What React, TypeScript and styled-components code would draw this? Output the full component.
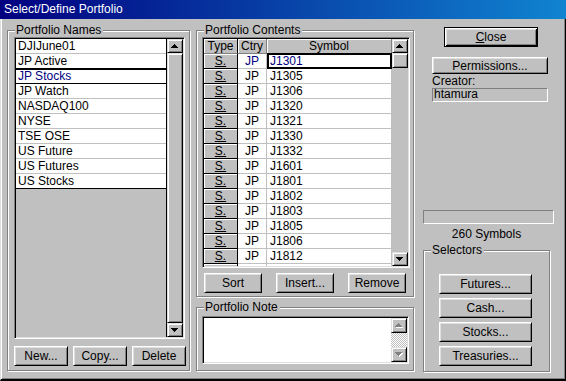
import React from "react";
import styled, { createGlobalStyle, css } from "styled-components";

const FACE = "#c0c0c0";
const LIGHT = "#dfdfdf";
const SHADOW = "#808080";
const NAVY = "#000080";

const GlobalStyle = createGlobalStyle`
  html, body { margin: 0; padding: 0; background: ${FACE}; }
  body { font-family: "Liberation Sans", Arial, sans-serif; font-size: 12px; color: #000; }
  *, *::before, *::after { box-sizing: border-box; }
  button { font-family: inherit; }
`;

const Window = styled.div`
  width: 566px;
  height: 381px;
  display: flex;
  flex-direction: column;
  background: ${FACE};
  overflow: hidden;
`;

const TitleBar = styled.div`
  flex: none;
  height: 19px;
  padding-left: 4px;
  background: linear-gradient(to right, #000080, #1084d0);
  color: #fff;
  font-size: 12px;
  line-height: 19px;
  white-space: nowrap;
`;

const Client = styled.div`
  flex: 1;
  display: flex;
  align-items: flex-start;
  padding-left: 6px;
  border-left: 1px solid ${LIGHT};
  border-right: 1px solid #000;
  border-bottom: 2px solid #000;
  box-shadow: inset 1px 0 #fff, inset -1px -1px ${SHADOW};
`;

const LeftColumn = styled.div`
  flex: none;
  margin-top: 11px;
`;

const MiddleColumn = styled.div`
  flex: none;
  width: 218px;
  margin-top: 11px;
  margin-left: 6px;
  display: flex;
  flex-direction: column;
  gap: 10px;
`;

const RightColumn = styled.div`
  flex: none;
  width: 131px;
  margin-top: 8px;
  margin-left: 9px;
  display: flex;
  flex-direction: column;
  align-items: flex-start;
`;

const Group = styled.div<{ $w: number; $h: number; $pad: string }>`
  position: relative;
  flex: none;
  width: ${(p) => p.$w}px;
  height: ${(p) => p.$h}px;
  padding: ${(p) => p.$pad};
  border: 1px solid ${SHADOW};
  box-shadow: inset 1px 1px #fff, 1px 1px #fff;
  display: flex;
  flex-direction: column;
  align-items: flex-start;
`;

const Legend = styled.span`
  position: absolute;
  top: -7px;
  left: 7px;
  padding: 0 2px 0 1px;
  background: ${FACE};
  font-size: 12px;
  line-height: 13px;
  white-space: nowrap;
`;

const Sunken = styled.div<{ $w: number; $h: number }>`
  flex: none;
  width: ${(p) => p.$w}px;
  height: ${(p) => p.$h}px;
  display: flex;
  padding: 1px;
  background: ${FACE};
  border: 1px solid;
  border-color: ${SHADOW} #fff #fff ${SHADOW};
  box-shadow: inset 1px 1px #000, inset -1px -1px ${LIGHT};
`;

const bevel = css`
  background: ${FACE};
  border: 1px solid;
  border-color: #fff #000 #000 #fff;
  box-shadow: inset 1px 1px ${LIGHT}, inset -1px -1px ${SHADOW};
`;

const Button = styled.button<{ $w: number; $h?: number; $default?: boolean }>`
  flex: none;
  width: ${(p) => p.$w}px;
  height: ${(p) => p.$h ?? 20}px;
  margin: 0;
  padding: 0;
  font-size: 12px;
  line-height: 12px;
  color: #000;
  display: flex;
  align-items: center;
  justify-content: center;
  white-space: nowrap;
  ${bevel}
  ${(p) =>
    p.$default &&
    css`
      border-color: #000;
      box-shadow: inset 1px 1px #fff, inset -1px -1px #000, inset 2px 2px ${LIGHT},
        inset -2px -2px ${SHADOW};
    `}
`;

const Underlined = styled.span`
  text-decoration: underline;
  text-underline-offset: 1px;
`;

/* ---------- scrollbar ---------- */

const ScrollBar = styled.div`
  flex: none;
  width: 16px;
  display: flex;
  flex-direction: column;
  background: ${FACE};
`;

const ScrollButton = styled.div<{ $h: number }>`
  flex: none;
  width: 16px;
  height: ${(p) => p.$h}px;
  display: flex;
  align-items: center;
  justify-content: center;
  background: ${FACE};
  border: 1px solid;
  border-color: ${LIGHT} #000 #000 ${LIGHT};
  box-shadow: inset 1px 1px #fff, inset -1px -1px ${SHADOW};
`;

const Thumb = styled(ScrollButton)<{ $grow?: boolean }>`
  ${(p) => p.$grow && css`flex: 1;`}
`;

const Track = styled.div<{ $checker?: boolean }>`
  flex: 1;
  background: ${FACE};
  ${(p) =>
    p.$checker &&
    css`
      background-image: conic-gradient(#fff 25%, ${FACE} 0 50%, #fff 0 75%, ${FACE} 0);
      background-size: 2px 2px;
    `}
`;

const UP = "M3 0h1v1H3zM2 1h3v1H2zM1 2h5v1H1zM0 3h7v1H0z";
const DOWN = "M0 0h7v1H0zM1 1h5v1H1zM2 2h3v1H2zM3 3h1v1H3z";

const Arrow = ({ dir, disabled }: { dir: "up" | "down"; disabled?: boolean }) => {
  const d = dir === "up" ? UP : DOWN;
  return (
    <svg width="8" height="5" viewBox="0 0 8 5" shapeRendering="crispEdges">
      {disabled && <path d={d} fill="#fff" transform="translate(1 1)" />}
      <path d={d} fill={disabled ? SHADOW : "#000"} />
    </svg>
  );
};

/* ---------- portfolio names list ---------- */

const NameRows = styled.div`
  flex: none;
  width: 151px;
  display: flex;
  flex-direction: column;
  border-right: 1px solid #000;
`;

const NameRow = styled.div<{ $sel?: boolean }>`
  position: relative;
  flex: none;
  height: 15px;
  padding-left: 2px;
  background: #fff;
  border-bottom: 1px solid ${FACE};
  line-height: 14px;
  white-space: nowrap;
  color: ${(p) => (p.$sel ? NAVY : "#000")};
  &:last-child {
    border-bottom-color: #000;
  }
  ${(p) =>
    p.$sel &&
    css`
      &::after {
        content: "";
        position: absolute;
        left: 0;
        right: 0;
        top: -1px;
        bottom: -2px;
        border-top: 2px solid #000;
        border-bottom: 2px solid #000;
      }
    `}
`;

const ButtonRow = styled.div<{ $gap: number; $mt: number; $ml?: number }>`
  display: flex;
  gap: ${(p) => p.$gap}px;
  margin-top: ${(p) => p.$mt}px;
  margin-left: ${(p) => p.$ml ?? 0}px;
`;

/* ---------- contents grid ---------- */

const Grid = styled.div`
  flex: none;
  width: 188px;
  display: flex;
  flex-direction: column;
  overflow: hidden;
`;

const GridRow = styled.div`
  flex: none;
  display: flex;
  height: 15px;
`;

const HeadCell = styled.div<{ $w: number; $edge?: string }>`
  flex: none;
  width: ${(p) => p.$w}px;
  height: 15px;
  background: ${FACE};
  border-right: 1px solid ${(p) => p.$edge ?? SHADOW};
  border-bottom: 1px solid ${SHADOW};
  box-shadow: inset 1px 1px #fff;
  text-align: center;
  line-height: 14px;
`;

const TypeCell = styled.div`
  flex: none;
  width: 34px;
  height: 15px;
  background: ${FACE};
  border-right: 1px solid #000;
  border-bottom: 1px solid #000;
  box-shadow: inset 1px 1px #fff;
  text-align: center;
  line-height: 14px;
`;

const CtryCell = styled.div<{ $sel?: boolean }>`
  flex: none;
  width: 29px;
  height: 15px;
  background: #fff;
  border-right: 1px solid ${FACE};
  border-bottom: 1px solid ${FACE};
  text-align: center;
  line-height: 14px;
  color: ${(p) => (p.$sel ? NAVY : "#000")};
`;

const SymbolCell = styled.div<{ $sel?: boolean }>`
  position: relative;
  flex: none;
  width: 125px;
  height: 15px;
  padding-left: 3px;
  background: #fff;
  border-right: 1px solid ${FACE};
  border-bottom: 1px solid ${FACE};
  line-height: 14px;
  color: ${(p) => (p.$sel ? NAVY : "#000")};
  ${(p) =>
    p.$sel &&
    css`
      &::after {
        content: "";
        position: absolute;
        left: 0;
        right: -1px;
        top: -1px;
        bottom: -1px;
        border: 2px solid #000;
      }
    `}
`;

/* ---------- note ---------- */

const NoteText = styled.div`
  flex: 1;
  background: #fff;
`;

/* ---------- right column ---------- */

const CloseButton = styled(Button)`
  margin-left: 21px;
`;

const PermissionsButton = styled(Button)`
  margin: 10px 0 0 9px;
`;

const FieldLabel = styled.div`
  margin-left: 9px;
  height: 14px;
  line-height: 15px;
`;

const ReadOnlyField = styled.div`
  width: 116px;
  height: 14px;
  margin-left: 9px;
  padding-left: 1px;
  border: 1px solid;
  border-color: ${SHADOW} #fff #fff ${SHADOW};
  line-height: 10px;
`;

const Progress = styled.div`
  width: 131px;
  height: 14px;
  margin-top: 108px;
  border: 1px solid;
  border-color: ${SHADOW} #fff #fff ${SHADOW};
`;

const Count = styled.div`
  width: 127px;
  height: 14px;
  margin-top: 3px;
  text-align: center;
  line-height: 14px;
`;

const SelectorsGroup = styled(Group)`
  margin-top: 9px;
  gap: 4px;
`;

const names = [
  "DJIJune01",
  "JP Active",
  "JP Stocks",
  "JP Watch",
  "NASDAQ100",
  "NYSE",
  "TSE OSE",
  "US Future",
  "US Futures",
  "US Stocks",
];

const symbols = [
  "J1301",
  "J1305",
  "J1306",
  "J1320",
  "J1321",
  "J1330",
  "J1332",
  "J1601",
  "J1801",
  "J1802",
  "J1803",
  "J1805",
  "J1806",
  "J1812",
];

export default function App() {
  return (
    <>
      <GlobalStyle />
      <Window>
        <TitleBar>Select/Define Portfolio</TitleBar>
        <Client>
          <LeftColumn>
            <Group $w={183} $h={341} $pad="6px 4px 4px 6px">
              <Legend>Portfolio Names</Legend>
              <Sunken $w={171} $h={302}>
                <NameRows>
                  {names.map((n) => (
                    <NameRow key={n} $sel={n === "JP Stocks"}>
                      {n}
                    </NameRow>
                  ))}
                </NameRows>
                <ScrollBar>
                  <ScrollButton $h={14}>
                    <Arrow dir="up" />
                  </ScrollButton>
                  <Thumb $h={14} $grow />
                  <ScrollButton $h={14}>
                    <Arrow dir="down" />
                  </ScrollButton>
                </ScrollBar>
              </Sunken>
              <ButtonRow $gap={5} $mt={7}>
                <Button $w={54}>New...</Button>
                <Button $w={54}>Copy...</Button>
                <Button $w={54}>Delete</Button>
              </ButtonRow>
            </Group>
          </LeftColumn>

          <MiddleColumn>
            <Group $w={218} $h={267} $pad="6px 0 0 5px">
              <Legend>Portfolio Contents</Legend>
              <Sunken $w={208} $h={231}>
                <Grid>
                  <GridRow>
                    <HeadCell $w={34} $edge="#000">
                      Type
                    </HeadCell>
                    <HeadCell $w={29}>Ctry</HeadCell>
                    <HeadCell $w={125}>Symbol</HeadCell>
                  </GridRow>
                  {symbols.map((s, i) => (
                    <GridRow key={s}>
                      <TypeCell>
                        <Underlined>S.</Underlined>
                      </TypeCell>
                      <CtryCell $sel={i === 0}>JP</CtryCell>
                      <SymbolCell $sel={i === 0}>{s}</SymbolCell>
                    </GridRow>
                  ))}
                  <GridRow>
                    <TypeCell />
                    <CtryCell />
                    <SymbolCell />
                  </GridRow>
                </Grid>
                <ScrollBar>
                  <ScrollButton $h={14}>
                    <Arrow dir="up" />
                  </ScrollButton>
                  <Thumb $h={15} />
                  <Track />
                  <ScrollButton $h={14}>
                    <Arrow dir="down" />
                  </ScrollButton>
                </ScrollBar>
              </Sunken>
              <ButtonRow $gap={14} $mt={5} $ml={2}>
                <Button $w={58}>Sort</Button>
                <Button $w={58}>Insert...</Button>
                <Button $w={58}>Remove</Button>
              </ButtonRow>
            </Group>

            <Group $w={218} $h={64} $pad="8px 0 0 5px">
              <Legend>Portfolio Note</Legend>
              <Sunken $w={207} $h={48}>
                <NoteText />
                <ScrollBar>
                  <ScrollButton $h={15}>
                    <Arrow dir="up" disabled />
                  </ScrollButton>
                  <Track $checker />
                  <ScrollButton $h={15}>
                    <Arrow dir="down" disabled />
                  </ScrollButton>
                </ScrollBar>
              </Sunken>
            </Group>
          </MiddleColumn>

          <RightColumn>
            <CloseButton $w={94} $default>
              <Underlined>C</Underlined>lose
            </CloseButton>
            <PermissionsButton $w={116} $h={17}>
              Permissions...
            </PermissionsButton>
            <FieldLabel>Creator:</FieldLabel>
            <ReadOnlyField>htamura</ReadOnlyField>
            <Progress />
            <Count>260 Symbols</Count>
            <SelectorsGroup $w={127} $h={122} $pad="23px 0 0 15px">
              <Legend>Selectors</Legend>
              <Button $w={93}>Futures...</Button>
              <Button $w={93}>Cash...</Button>
              <Button $w={93}>Stocks...</Button>
              <Button $w={93}>Treasuries...</Button>
            </SelectorsGroup>
          </RightColumn>
        </Client>
      </Window>
    </>
  );
}
